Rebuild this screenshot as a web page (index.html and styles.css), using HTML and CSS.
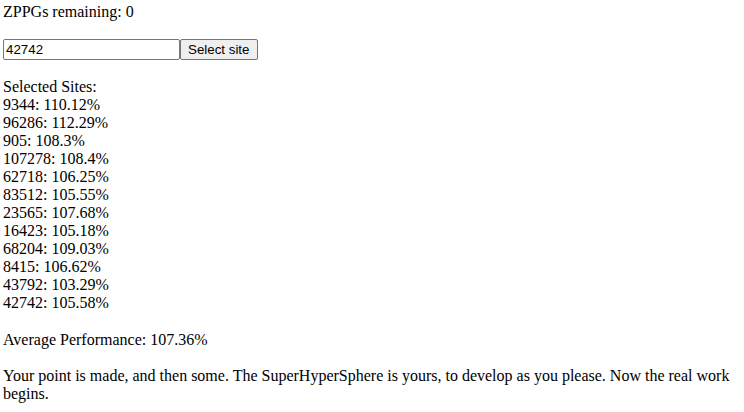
FILE: index.html
```html
<!DOCTYPE html>
<html>
<head>
<meta charset="utf-8">
<link rel="stylesheet" href="styles.css">
</head>
<body>
<div class="page">
  <p class="status">ZPPGs remaining: 0</p>
  <form class="picker">
    <input class="site-input" type="text" value="42742"><button class="select-btn" type="button">Select site</button>
  </form>
  <div class="sites">
    <div>Selected Sites:</div>
    <div>9344: 110.12%</div>
    <div>96286: 112.29%</div>
    <div>905: 108.3%</div>
    <div>107278: 108.4%</div>
    <div>62718: 106.25%</div>
    <div>83512: 105.55%</div>
    <div>23565: 107.68%</div>
    <div>16423: 105.18%</div>
    <div>68204: 109.03%</div>
    <div>8415: 106.62%</div>
    <div>43792: 103.29%</div>
    <div>42742: 105.58%</div>
  </div>
  <p class="avg">Average Performance: 107.36%</p>
  <p class="msg">Your point is made, and then some. The SuperHyperSphere is yours, to develop as you please. Now the real work begins.</p>
</div>
</body>
</html>
```

FILE: styles.css
```css
html, body {
  margin: 0;
  padding: 0;
  background: #fff;
}
body {
  font-family: "Liberation Serif", "Times New Roman", serif;
  font-size: 16px;
  line-height: 18px;
  color: #000;
}
.page {
  padding: 3px 3px;
}
.status {
  margin: 0 0 18px 0;
}
.picker {
  margin: 0;
  display: flex;
  align-items: stretch;
}
.site-input {
  font-family: "Liberation Sans", Arial, sans-serif;
  font-size: 13.33px;
  width: 177px;
  height: 21px;
  box-sizing: border-box;
  border: 1px solid #767676;
  border-radius: 2px;
  padding: 1px 2px;
  margin: 0;
}
.select-btn {
  font-family: "Liberation Sans", Arial, sans-serif;
  font-size: 13.33px;
  height: 21px;
  box-sizing: border-box;
  border: 1px solid #767676;
  border-radius: 2px;
  background: #efefef;
  padding: 1px 7px;
  margin: 0;
  color: #000;
}
.sites {
  margin-top: 18px;
}
.avg {
  margin: 19px 0 18px;
}
.msg {
  margin: 0;
}
```
